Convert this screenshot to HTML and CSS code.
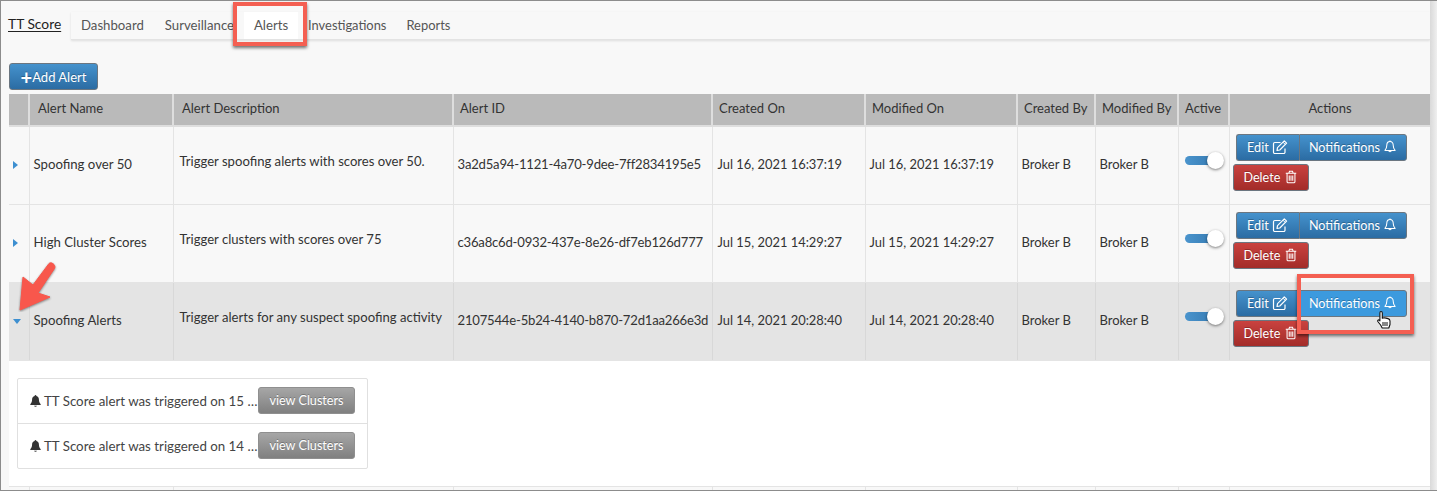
FILE: index.html
```html
<!DOCTYPE html>
<html lang="en">
<head>
<meta charset="utf-8">
<title>TT Score Alerts</title>
<link rel="stylesheet" href="styles.css">
</head>
<body>
<svg width="0" height="0" class="defs">
  <symbol id="i-edit" viewBox="0 0 16 16"><path d="M13 9.500V13.200A1.300 1.300 0 0 1 11.700 14.500H2.800A1.300 1.300 0 0 1 1.500 13.200V4.800A1.300 1.300 0 0 1 2.800 3.500H8.500" fill="none" stroke="currentColor" stroke-width="1.200"/><path d="M5.500 8.700L12.300 1.900L14.600 4.200L7.800 11L5 11.500Z" fill="none" stroke="currentColor" stroke-width="1.200" stroke-linejoin="round"/><path d="M11 3.200L13.300 5.500" stroke="currentColor" stroke-width="1"/></symbol>
  <symbol id="i-bell" viewBox="0 0 16 16"><path d="M8 1.800C5.400 1.800 4.300 3.900 4.300 6.200C4.300 9.200 3.400 10.500 2.200 11.900H13.800C12.600 10.500 11.700 9.200 11.700 6.200C11.700 3.900 10.600 1.800 8 1.800Z" fill="none" stroke="currentColor" stroke-width="1.200" stroke-linejoin="round"/><path d="M6.400 12.200A1.700 1.700 0 0 0 9.600 12.200" fill="none" stroke="currentColor" stroke-width="1.200"/><path d="M8 .7V2" stroke="currentColor" stroke-width="1.200"/></symbol>
  <symbol id="i-bell-solid" viewBox="0 0 16 16"><path d="M8 .5C7.300.5 6.900 1 6.900 1.700C4.900 2.200 3.800 3.900 3.800 6.200C3.800 9.200 2.900 10.500 1.600 12V13H14.400V12C13.100 10.500 12.200 9.200 12.200 6.200C12.200 3.900 11.100 2.200 9.100 1.700C9.100 1 8.700.5 8 .5Z" fill="currentColor"/><path d="M6.200 13.700A1.900 1.900 0 0 0 9.800 13.700Z" fill="currentColor"/></symbol>
  <symbol id="i-trash" viewBox="0 0 16 16"><path d="M2 3.800H14M5.500 3.600L6.300 1.500H9.700L10.500 3.600M3.500 4V13.300A1.200 1.200 0 0 0 4.700 14.500H11.300A1.200 1.200 0 0 0 12.500 13.300V4M6 6.300V12.300M8 6.300V12.300M10 6.300V12.300" fill="none" stroke="currentColor" stroke-width="1.200"/></symbol>
</svg>
<div class="page">
  <nav class="tabs">
    <a class="brand">TT Score</a>
    <div class="tab-strip">
      <a class="tab first">Dashboard</a>
      <a class="tab">Surveillance</a>
      <a class="tab active">Alerts</a>
      <a class="tab narrow">Investigations</a>
      <a class="tab narrow">Reports</a>
    </div>
  </nav>
  <div class="toolbar">
    <button class="btn blue add"><span class="plus">+</span>Add Alert</button>
  </div>
  <table class="grid">
    <colgroup>
      <col class="c0"><col class="c1"><col class="c2"><col class="c3"><col class="c4"><col class="c5"><col class="c6"><col class="c7"><col class="c8"><col class="c9">
    </colgroup>
    <thead>
      <tr><th></th><th class="wide">Alert Name</th><th class="wide">Alert Description</th><th>Alert ID</th><th>Created On</th><th>Modified On</th><th>Created By</th><th>Modified By</th><th>Active</th><th class="center">Actions</th></tr>
    </thead>
    <tbody>
      <tr>
        <td class="exp"><span class="caret-r"></span></td>
        <td class="name">Spoofing over 50</td>
        <td class="desc">Trigger spoofing alerts with scores over 50.</td>
        <td class="id">3a2d5a94-1121-4a70-9dee-7ff2834195e5</td>
        <td class="date created">Jul 16, 2021 16:37:19</td><td class="date">Jul 16, 2021 16:37:19</td><td>Broker B</td><td>Broker B</td>
        <td class="act"><span class="switch"><span class="knob"></span></span></td>
        <td class="actions"><div class="btn-group"><button class="btn blue edit">Edit <svg class="ico ico-edit"><use href="#i-edit"/></svg></button><button class="btn blue notif">Notifications <svg class="ico"><use href="#i-bell"/></svg></button></div><button class="btn red">Delete <svg class="ico"><use href="#i-trash"/></svg></button></td>
      </tr>
      <tr>
        <td class="exp"><span class="caret-r"></span></td>
        <td class="name">High Cluster Scores</td>
        <td class="desc">Trigger clusters with scores over 75</td>
        <td class="id">c36a8c6d-0932-437e-8e26-df7eb126d777</td>
        <td class="date created">Jul 15, 2021 14:29:27</td><td class="date">Jul 15, 2021 14:29:27</td><td>Broker B</td><td>Broker B</td>
        <td class="act"><span class="switch"><span class="knob"></span></span></td>
        <td class="actions"><div class="btn-group"><button class="btn blue edit">Edit <svg class="ico ico-edit"><use href="#i-edit"/></svg></button><button class="btn blue notif">Notifications <svg class="ico"><use href="#i-bell"/></svg></button></div><button class="btn red">Delete <svg class="ico"><use href="#i-trash"/></svg></button></td>
      </tr>
      <tr class="selected">
        <td class="exp"><span class="caret-d"></span></td>
        <td class="name">Spoofing Alerts</td>
        <td class="desc">Trigger alerts for any suspect spoofing activity</td>
        <td class="id">2107544e-5b24-4140-b870-72d1aa266e3d</td>
        <td class="date created">Jul 14, 2021 20:28:40</td><td class="date">Jul 14, 2021 20:28:40</td><td>Broker B</td><td>Broker B</td>
        <td class="act"><span class="switch"><span class="knob"></span></span></td>
        <td class="actions"><div class="btn-group"><button class="btn blue edit">Edit <svg class="ico ico-edit"><use href="#i-edit"/></svg></button><button class="btn blue notif hover">Notifications <svg class="ico"><use href="#i-bell"/></svg></button></div><button class="btn red">Delete <svg class="ico"><use href="#i-trash"/></svg></button></td>
      </tr>
      <tr class="detail">
        <td colspan="10">
          <ul class="notes">
            <li><svg class="ico-solid"><use href="#i-bell-solid"/></svg><span class="note-text">TT Score alert was triggered on 15 …</span><button class="btn gray">view Clusters</button></li>
            <li><svg class="ico-solid"><use href="#i-bell-solid"/></svg><span class="note-text">TT Score alert was triggered on 14 …</span><button class="btn gray">view Clusters</button></li>
          </ul>
        </td>
      </tr>
      <tr class="tail"><td></td><td></td><td></td><td></td><td></td><td></td><td></td><td></td><td></td><td></td></tr>
    </tbody>
  </table>
</div>
<div class="callout callout-alerts"></div>
<div class="callout callout-notif"></div>
<svg class="arrow" viewBox="0 0 40 52"><path d="M31 3.500C33 1.500 38 4.500 36.700 8.200L20 33L32 37L2 50L5 17L15 25Z" fill="#f8574c" stroke="#f8574c" stroke-linejoin="round" filter="drop-shadow(0 1px 1px rgba(0,0,0,.45))"/></svg>
<svg class="cursor" viewBox="0 0 16 20"><path d="M5 1.500C5.900 1.500 6.300 2 6.300 3V8.200L8 7.800L10 8.100L12 8.600C13.500 9 14 9.700 14 11V14.500L12.800 18H6.200L4.600 15L1.800 11.500C1.200 10.500 2.400 9.500 3.300 10.200L3.900 10.800V3C3.900 2 4.200 1.500 5 1.500Z" fill="#fff" stroke="#111" stroke-width="1.100" stroke-linejoin="round"/><path d="M7 12V16M9 12V16M11 12V16" stroke="#111" stroke-width="1"/></svg>
</body>
</html>
```
FILE: styles.css
```css
* { box-sizing: border-box; }
html, body { margin: 0; padding: 0; }
body {
  width: 1437px;
  height: 492px;
  overflow: hidden;
  position: relative;
  background: #fff;
  font-family: Lato, "Liberation Sans", sans-serif;
  font-size: 13.200px;
  color: #333;
}
.defs { position: absolute; }
.page {
  height: 491px;
  width: 1437px;
  padding-right: 7px;
  overflow: hidden;
  background: linear-gradient(to right, #d9d9d9, #efefef) right top / 7px 100% no-repeat, #f8f8f8;
  border-top: 1px solid #8c8c8c;
  border-bottom: 1px solid #8c8c8c;
  border-left: 1px solid #8c8c8c;
}
.tabs {
  display: flex;
  align-items: flex-end;
  height: 39px;
  padding-left: 7px;
}
.brand {
  width: 63px;
  height: 28px;
  line-height: 23px;
  font-size: 13.800px;
  color: #222;
  text-decoration: underline;
  text-underline-offset: 2px;
}
.tab-strip {
  flex: 1;
  display: flex;
  height: 28px;
  border-bottom: 1px solid #e3e3e3;
  box-shadow: 0 1px 2px #ddd;
}
.tab { padding: 4px 10px 0; height: 27px; line-height: 18px; color: #555; }
.first { padding-right: 11px; }
.narrow { font-size: 12.900px; }
.tab.active {
  background: #fff;
  padding: 4px 0 0;
  width: 54px;
  text-align: center;
}
.toolbar { height: 54px; padding: 23px 0 0 8px; }
.btn {
  font: inherit;
  font-size: 12.600px;
  color: #fff;
  border: 1px solid #6b7680;
  text-shadow: 0 -1px 0 rgba(0,0,0,.25);
  border-radius: 3px;
  padding: 0;
  height: 27px;
  display: inline-flex;
  align-items: center;
  justify-content: center;
  white-space: pre;
}
.blue { background: linear-gradient(#4592cd, #2b6ca3); }
.red { background: linear-gradient(#c9423f, #a32c29); width: 76px; }
.gray { background: linear-gradient(#a6a6a6, #808080); width: 97px; border-color: #8f8f8f; }
.add { width: 89px; height: 27px; font-size: 13px; }
.plus { font-size: 20px; line-height: 14px; font-weight: 700; }
.grid {
  width: 1421px;
  margin-left: 8px;
  table-layout: fixed;
  border-collapse: collapse;
  background: #f8f8f8;
}
.c0 { width: 20px; } .c1 { width: 144px; } .c2 { width: 280px; } .c3 { width: 259px; }
.c4 { width: 153px; } .c5 { width: 152px; } .c6 { width: 78px; } .c7 { width: 83px; }
.c8 { width: 51px; } .c9 { width: 201px; }
th {
  height: 32px;
  background: #bababa;
  border-left: 2px solid #dedede;
  border-bottom: 2px solid #dedede;
  font-weight: 400;
  font-size: 13px;
  text-align: left;
  padding: 0 0 3px 6px;
  color: #333;
}
th:first-child { border-left: 0; }
th.wide { padding-left: 8px; }
th.center { text-align: center; padding-left: 0; }
td {
  height: 78px;
  border-left: 1px solid #e4e4e4;
  border-bottom: 1px solid #e4e4e4;
  padding: 0 0 3px 4px;
  white-space: nowrap;
  font-size: 13px;
  color: #333;
}
td:first-child { border-left: 0; }
td.name { font-size: 13.200px; }
td.date { font-size: 12.900px; }
td.created { padding-left: 5px; }
td.desc { padding: 0 0 9px 6px; font-size: 13.100px; }
td.id { padding-left: 4px; font-size: 13.100px; letter-spacing: -.2px; }
td.exp { padding: 0 0 0 4px; }
.caret-r {
  display: block;
  width: 0; height: 0;
  border-left: 5px solid #3d8fd0;
  border-top: 4px solid transparent;
  border-bottom: 4px solid transparent;
}
.caret-d {
  display: block;
  width: 0; height: 0;
  margin-top: 1px;
  border-top: 5px solid #3d8fd0;
  border-left: 4px solid transparent;
  border-right: 4px solid transparent;
}
.selected td { background: #e4e4e4; border-left-color: #d8d8d8; }
td.act { padding: 0 0 9px 6px; }
.switch {
  display: block;
  position: relative;
  width: 34px;
  height: 9px;
  border-radius: 5px;
  background: linear-gradient(to right, #4a94cd, #3377ae);
}
.knob {
  position: absolute;
  top: -4px;
  right: -5px;
  width: 17px;
  height: 17px;
  border-radius: 50%;
  background: #fff;
  box-shadow: 0 1px 3px rgba(0,0,0,.5);
}
td.actions { padding: 0 0 6px 3px; }
.btn-group { display: flex; margin-left: 3px; margin-bottom: 3px; }
.edit { width: 63px; border-radius: 3px 0 0 3px; border-right-width: 0; }
.notif { width: 108px; border-radius: 0 3px 3px 0; padding-left: 1px; }
.hover { background: #3c9ade; }
.ico { width: 14px; height: 14px; }
.ico-edit { width: 16px; height: 16px; }
.detail td { height: 126px; background: #fff; padding: 0 0 0 8px; border-left: 0; }
.tail td { height: 8px; padding: 0; background: #f8f8f8; }
.notes {
  list-style: none;
  margin: 0;
  padding: 0;
  width: 351px;
  border: 1px solid #e0e0e0;
  border-radius: 2px;
  background: #fff;
}
.notes li {
  display: flex;
  align-items: center;
  height: 44px;
  padding-left: 11px;
}
.notes li + li { height: 45px; border-top: 1px solid #e0e0e0; }
.ico-solid { width: 13px; height: 14px; color: #333; margin-right: 2px; flex: none; }
.note-text { width: 214px; font-size: 13.300px; color: #444; white-space: nowrap; }
.callout {
  position: absolute;
  border: 4px solid #f45f52;
  box-shadow: 0 2px 3px rgba(0,0,0,.55);
}
.callout-alerts { left: 233px; top: 2px; width: 74px; height: 44px; }
.callout-notif { left: 1297px; top: 274px; width: 117px; height: 60px; }
.arrow { position: absolute; left: 18px; top: 260px; width: 40px; height: 52px; }
.cursor { position: absolute; left: 1376px; top: 310px; width: 16px; height: 20px; }
```
